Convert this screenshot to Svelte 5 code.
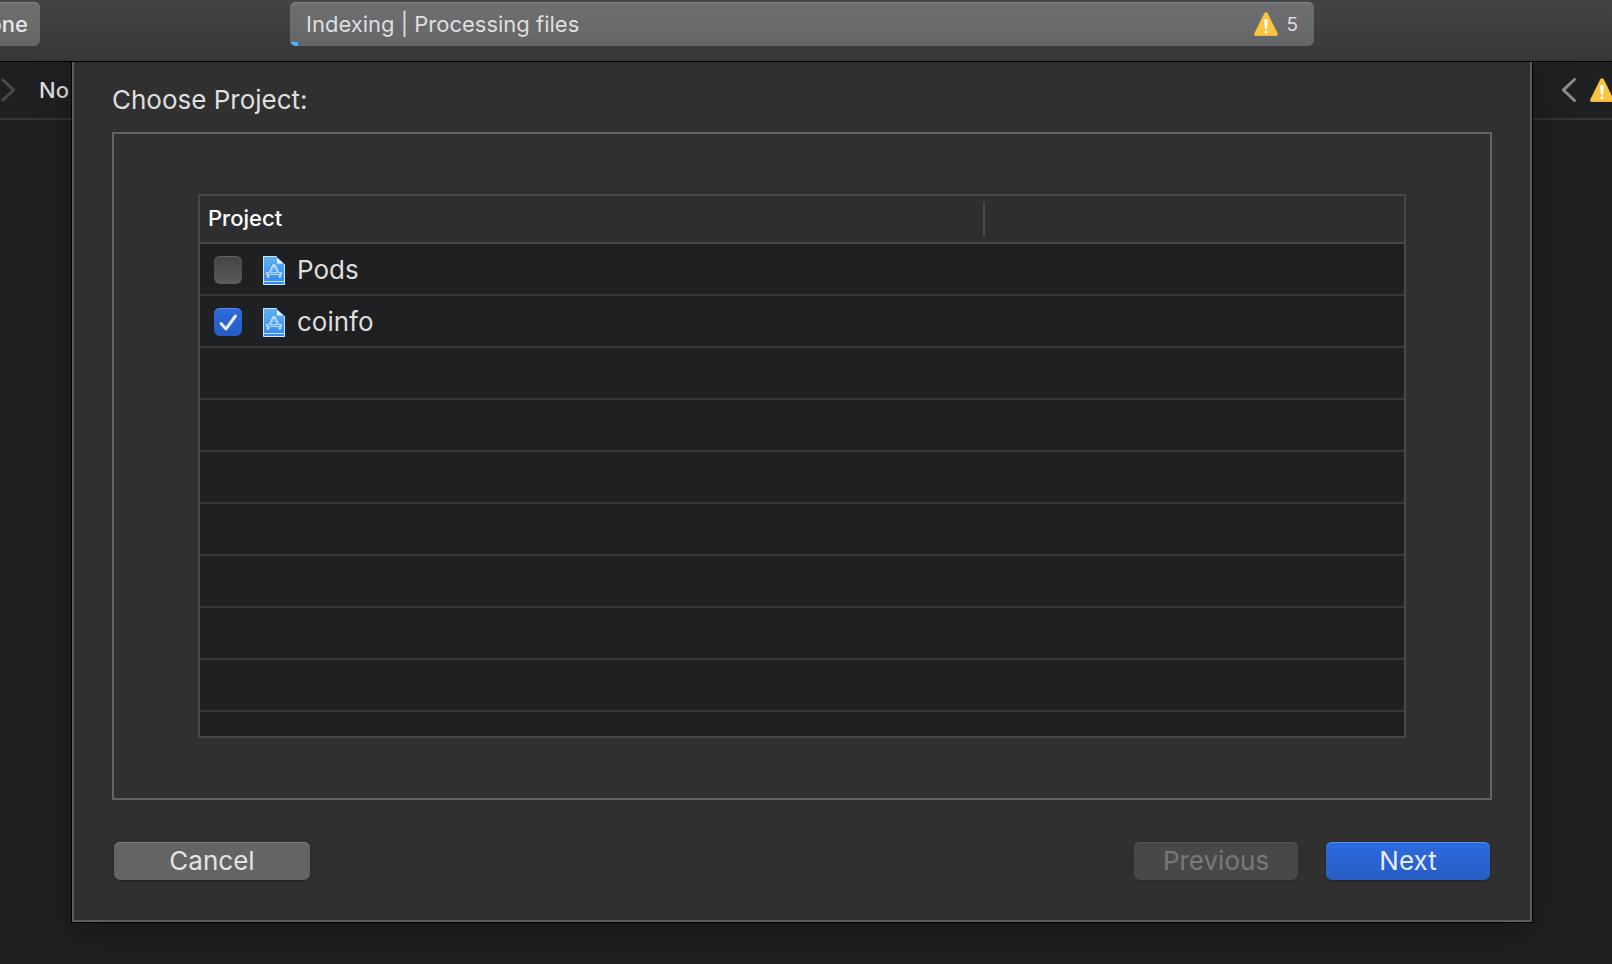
<script lang="ts">
	type Project = {
		name: string;
		checked: boolean;
	};

	let projects = $state<Project[]>([
		{ name: 'Pods', checked: false },
		{ name: 'coinfo', checked: true }
	]);

	const emptyRows = Array.from({ length: 8 }, (_, i) => i);
</script>

{#snippet warningIcon()}
	<svg class="warning" viewBox="0 0 24 24" aria-hidden="true">
		<path
			d="M10.3 1.3C11 -.1 13 -.1 13.7 1.3L23.6 21.2C24.2 22.6 23.5 24 22 24H2C.5 24-.2 22.6.4 21.2Z"
			fill="#f9c440"
		/>
		<path d="M1.2 23.6H22.8" stroke="#efae35" stroke-width="0.8" />
		<path d="M10.2 8.2Q10.2 6.9 12 6.9T13.8 8.2L13 17.2H11Z" fill="#fff" />
		<circle cx="12" cy="20" r="1.4" fill="#fff" />
	</svg>
{/snippet}

{#snippet projectIcon()}
	<svg class="file-icon" viewBox="0 0 22 29" aria-hidden="true">
		<defs>
			<linearGradient id="file-blue" x1="0" y1="0" x2="0" y2="1">
				<stop offset="0" stop-color="#62b4ef" />
				<stop offset="1" stop-color="#2f86f5" />
			</linearGradient>
		</defs>
		<path d="M0 0H13L22 8.5V29H0Z" fill="url(#file-blue)" />
		<path d="M13.5 .5H.5V28.5H21.5V8" fill="none" stroke="#c9e4fd" stroke-width="1" />
		<path d="M14 2V7.5H20.5Z" fill="#f5f8fb" />
		<path d="M1 25.5H21" stroke="#c9e4fd" stroke-width="1" />
		<g fill="none" stroke="#d3e9fd" stroke-linecap="round">
			<path d="M10.5 9.5L5 20.5M11.5 9.5L17 20.5" stroke-width="2.4" />
			<path d="M4 17.5H18" stroke-width="2.4" />
		</g>
		<g fill="none" stroke="#4a9ff3" stroke-width="0.8">
			<path d="M10.5 10.5L5.5 20M11.5 10.5L16.500 20M4.500 17.5H17.500" />
		</g>
	</svg>
{/snippet}

<div class="window">
	<header class="toolbar">
		<button type="button" class="device-btn">one</button>
		<div class="status" role="status">
			<span class="status-text">Indexing | Processing files</span>
			{@render warningIcon()}
			<span class="issue-count">5</span>
			<span class="progress"></span>
		</div>
	</header>

	<main class="workspace">
		<nav class="jump-bar" aria-label="Jump bar">
			<svg class="chevron dim" viewBox="0 0 14 24" aria-hidden="true">
				<path d="M2 2L12.5 12L2 22" />
			</svg>
			<span class="crumb">No</span>
			<button type="button" class="prev-issue" aria-label="Previous issue">
				<svg class="chevron" viewBox="0 0 14 24" aria-hidden="true">
					<path d="M12.5 1.5L1.5 12L12.5 22.5" />
				</svg>
			</button>
			<span class="issue">{@render warningIcon()}</span>
		</nav>

		<div class="sheet" role="dialog" aria-labelledby="sheet-title">
			<h1 id="sheet-title">Choose Project:</h1>

			<div class="group-box">
				<div class="table-frame">
					<table>
						<thead>
							<tr>
								<th class="project-col" scope="col">Project</th>
								<td><div class="divider"></div></td>
							</tr>
						</thead>
						<tbody>
							{#each projects as project (project.name)}
								<tr>
									<td colspan="2">
										<label class="project">
											<span class="check">
												<input type="checkbox" bind:checked={project.checked} />
												{#if project.checked}
													<svg viewBox="0 0 28 28" aria-hidden="true">
														<path d="M7 15.5L12 21L21.5 8" />
													</svg>
												{/if}
											</span>
											{@render projectIcon()}
											<span>{project.name}</span>
										</label>
									</td>
								</tr>
							{/each}
							{#each emptyRows as row (row)}
								<tr class:last={row === emptyRows.length - 1}>
									<td colspan="2"></td>
								</tr>
							{/each}
						</tbody>
					</table>
				</div>
			</div>

			<div class="actions">
				<button type="button" class="push-btn cancel">Cancel</button>
				<button type="button" class="push-btn" disabled>Previous</button>
				<button type="button" class="push-btn primary">Next</button>
			</div>
		</div>
	</main>
</div>

<style>
	:global(body) {
		background: #1f2022;
	}

	.window {
		display: flex;
		flex-direction: column;
		min-height: 100vh;
		overflow: hidden;
		color: #dfdfdf;
		font-family: Inter, 'Liberation Sans', sans-serif;
		font-size: 22px;
	}

	button {
		font-family: inherit;
		border: 0;
	}

	/* Toolbar */
	.toolbar {
		position: relative;
		z-index: 1;
		display: flex;
		align-items: flex-start;
		gap: 250px;
		height: 59px;
		padding: 2px 298px 0 0;
		border-bottom: 1px solid #000;
		background: linear-gradient(#434446, #363738);
	}

	.device-btn,
	.status {
		height: 44px;
		background: linear-gradient(#6e6f71, #656668);
		box-shadow: inset 0 1px #818283;
	}

	.device-btn {
		display: flex;
		flex: none;
		align-items: center;
		justify-content: flex-end;
		width: 40px;
		padding: 0 12px 0 0;
		border-radius: 0 6px 6px 0;
		color: #e6e6e6;
		font-size: 22px;
		font-weight: 500;
	}

	.status {
		position: relative;
		display: flex;
		flex: 1;
		align-items: center;
		box-sizing: border-box;
		padding: 0 16px;
		border-radius: 6px;
		overflow: hidden;
	}

	.status-text {
		flex: 1;
	}

	.issue-count {
		margin-left: 8px;
		font-size: 19px;
	}

	.progress {
		position: absolute;
		left: 0;
		bottom: 0;
		width: 8px;
		height: 4px;
		background: #54aef5;
	}

	.warning {
		display: block;
		flex: none;
		width: 24px;
		height: 24px;
	}

	/* Workspace: the sheet shares one cell with the bar behind it */
	.workspace {
		display: grid;
		flex: 1;
		grid-template-columns: minmax(0, 1fr);
		align-items: start;
	}

	.jump-bar {
		display: flex;
		grid-area: 1 / 1;
		align-items: center;
		height: 56px;
		border-bottom: 2px solid #343537;
		overflow: hidden;
	}

	.chevron {
		display: block;
		flex: none;
		width: 14px;
		height: 24px;
		fill: none;
		stroke: #8b8c8d;
		stroke-width: 3;
		stroke-linecap: round;
	}

	.chevron.dim {
		margin-left: 1px;
		stroke: #48494b;
	}

	.crumb {
		flex: 1;
		margin-left: 24px;
		font-weight: 500;
	}

	.prev-issue {
		padding: 0;
		background: none;
	}

	.issue {
		width: 22px;
		margin-left: 14px;
	}

	/* Sheet */
	.sheet {
		grid-area: 1 / 1;
		margin: 0 80px 0 72px;
		padding: 22px 38px 40px;
		border: 2px solid #5b5c5d;
		border-top: 0;
		background: #303031;
		box-shadow:
			0 0 0 1px #000,
			0 10px 36px #00000059;
	}

	h1 {
		margin: 0 0 16px;
		font-size: 26px;
		font-weight: 400;
		line-height: 32px;
	}

	.group-box {
		padding: 60px 84px;
		border: 2px solid #636363;
	}

	.table-frame {
		border: 2px solid #464748;
		background: #1f2022;
	}

	table {
		width: 100%;
		border-spacing: 0;
		table-layout: fixed;
	}

	th,
	td {
		box-sizing: border-box;
		height: 52px;
		padding: 0;
		border-bottom: 2px solid #37383a;
	}

	thead th,
	thead td {
		height: 48px;
		border-color: #464749;
		background: #2d2e30;
	}

	.project-col {
		width: 65%;
		padding: 0 0 2px 8px;
		color: #fff;
		font-size: 22px;
		font-weight: 500;
		text-align: left;
	}

	.divider {
		height: 34px;
		border-left: 2px solid #48494b;
	}

	.last td {
		height: 24px;
		border-bottom: 0;
	}

	.project {
		display: flex;
		align-items: center;
		padding: 2px 0 0 14px;
		font-size: 26px;
		line-height: 32px;
	}

	.check {
		display: grid;
		width: 28px;
		height: 28px;
	}

	.check input,
	.check svg {
		grid-area: 1 / 1;
		width: 28px;
		height: 28px;
		margin: 0;
	}

	.check input {
		appearance: none;
		border-radius: 6px;
		background: linear-gradient(#434446, #5a5b5c);
		box-shadow: inset 0 1px #626364;
	}

	.check input:checked {
		background: linear-gradient(#2d6bdf, #275cc2);
		box-shadow: inset 0 1px #5b8ce8;
	}

	.check svg {
		fill: none;
		pointer-events: none;
		stroke: #e6ecf9;
		stroke-width: 3;
		stroke-linecap: round;
		stroke-linejoin: round;
	}

	.file-icon {
		width: 22px;
		height: 29px;
		margin: 0 12px 0 21px;
	}

	/* Buttons */
	.actions {
		display: flex;
		gap: 28px;
		margin-top: 42px;
		padding: 0 2px;
	}

	.push-btn {
		width: 164px;
		height: 38px;
		padding: 0;
		border-radius: 6px;
		background: #646464;
		box-shadow:
			inset 0 1px #7d7d7e,
			0 1px 2px #00000059;
		color: #e4e4e4;
		font-size: 26px;
		line-height: 38px;
	}

	.push-btn:disabled {
		background: #484849;
		box-shadow:
			inset 0 1px #555556,
			0 1px 2px #00000033;
		color: #787878;
	}

	.push-btn.cancel {
		width: 196px;
		margin-right: auto;
	}

	.push-btn.primary {
		background: linear-gradient(#2c6be0, #275dc4);
		box-shadow:
			inset 0 1px #5c8ee9,
			0 1px 2px #00000059;
		color: #e6edfa;
	}
</style>
